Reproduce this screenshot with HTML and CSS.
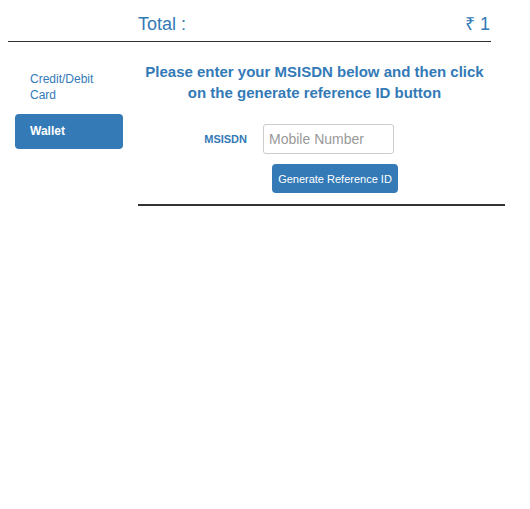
FILE: index.html
```html
<!DOCTYPE html>
<html>
<head>
<meta charset="utf-8">
<link rel="stylesheet" href="styles.css">
</head>
<body>
<div class="header">
  <span class="total-label">Total :</span>
  <span class="total-value">₹ 1</span>
</div>
<div class="main">
  <nav class="sidebar">
    <a class="nav-item">Credit/Debit<br>Card</a>
    <a class="nav-item active">Wallet</a>
  </nav>
  <section class="content">
    <h3 class="title">Please enter your MSISDN below and then click on the generate reference ID button</h3>
    <div class="form-row">
      <label class="label">MSISDN</label>
      <input class="input" type="text" placeholder="Mobile Number">
    </div>
    <div class="btn-row">
      <button class="btn">Generate Reference ID</button>
    </div>
  </section>
</div>
</body>
</html>
```

FILE: styles.css
```css
html, body {
  background: #fff;
}
body {
  margin: 8px;
  font-family: "Liberation Sans", Arial, sans-serif;
  color: #337ab7;
}
.header {
  width: 353px;
  padding-left: 130px;
  height: 33px;
  display: flex;
  justify-content: space-between;
  align-items: flex-end;
  border-bottom: 1px solid #333;
  font-size: 18px;
  line-height: 24px;
  box-sizing: content-box;
}
.header span {
  padding-bottom: 5px;
  padding-right: 1px;
}
.main {
  display: flex;
}
.sidebar {
  width: 130px;
  display: flex;
  flex-direction: column;
  padding-top: 29px;
}
.nav-item {
  display: block;
  margin-left: 7px;
  width: 108px;
  box-sizing: border-box;
  padding: 0 15px;
  font-size: 12px;
  line-height: 16px;
  color: #337ab7;
}
.nav-item + .nav-item {
  margin-top: 11px;
}
.nav-item.active {
  background: #337ab7;
  color: #fff;
  font-weight: bold;
  border-radius: 4px;
  height: 35px;
  line-height: 35px;
}
.content {
  width: 367px;
  border-bottom: 2px solid #333;
  padding-bottom: 11px;
}
.title {
  width: 353px;
  margin: 19px 0 0 0;
  text-align: center;
  font-size: 15px;
  line-height: 21px;
  font-weight: bold;
  color: #337ab7;
}
.form-row {
  display: flex;
  align-items: center;
  margin-top: 21px;
}
.label {
  width: 109px;
  text-align: right;
  font-size: 11px;
  font-weight: bold;
  color: #337ab7;
}
.input {
  margin-left: 16px;
  width: 131px;
  height: 30px;
  box-sizing: border-box;
  border: 1px solid #ccc;
  border-radius: 3px;
  padding: 0 5px;
  font-family: "Liberation Sans", Arial, sans-serif;
  font-size: 14px;
  color: #555;
  outline: none;
}
.input::placeholder {
  color: #999;
}
.btn-row {
  margin-top: 10px;
  padding-left: 134px;
}
.btn {
  width: 126px;
  height: 29px;
  border: none;
  border-radius: 4px;
  background: #337ab7;
  color: #fff;
  font-family: "Liberation Sans", Arial, sans-serif;
  font-size: 11px;
  padding: 0;
}
```
